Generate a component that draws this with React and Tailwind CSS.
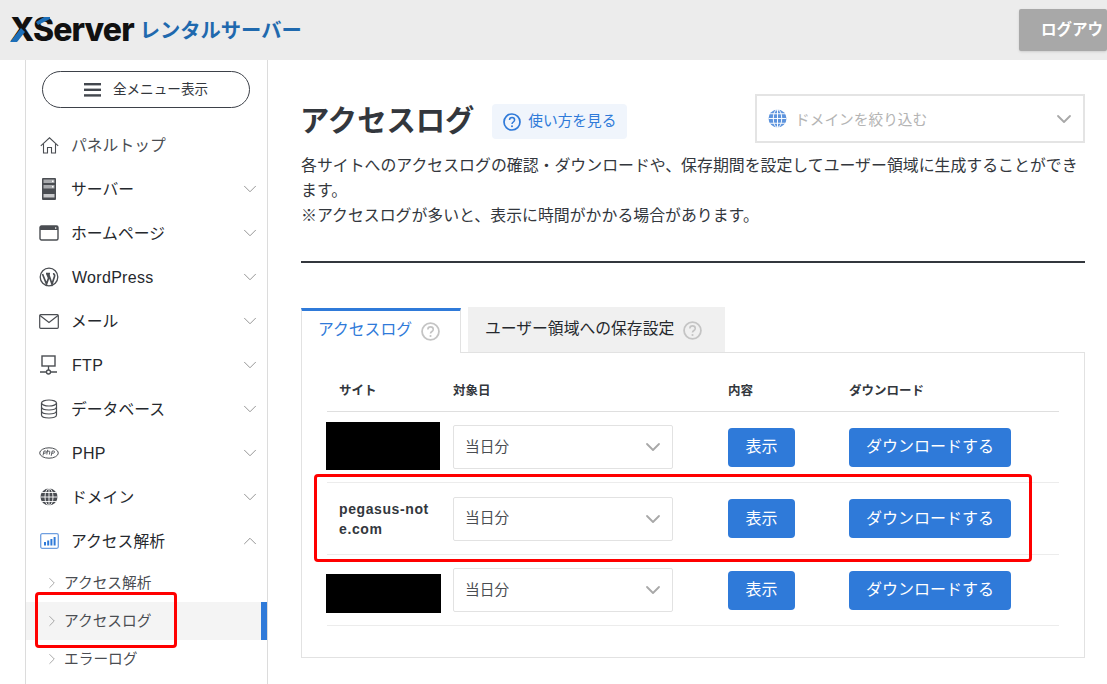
import React from "react";
import { ChevronDown, ChevronUp, ChevronRight } from "lucide-react";

const font = "font-['Liberation_Sans','Noto_Sans_CJK_JP',sans-serif]";

const HomeIcon = () => (
  <svg width="19" height="17" viewBox="0 0 19 17" fill="none" stroke="#4a4d52" strokeWidth="1.1">
    <path d="M0.8 8.8 L9.5 0.8 L18.2 8.8" />
    <path d="M3.5 7 V16 H7.5 V10.5 H11.5 V16 H15.5 V7" />
  </svg>
);

const ServerIcon = () => (
  <svg width="14" height="22" viewBox="0 0 14 22">
    <rect x="0" y="0" width="14" height="22" rx="1" fill="#4a4d52" />
    <rect x="1.5" y="1.5" width="11" height="3.5" fill="#a9abae" />
    <rect x="1.5" y="7" width="11" height="3.5" fill="#a9abae" />
    <rect x="1.5" y="16" width="11" height="3.5" fill="#c9cacc" />
    <rect x="10" y="2.5" width="1.5" height="1.5" fill="#fff" />
    <rect x="10" y="8" width="1.5" height="1.5" fill="#fff" />
  </svg>
);

const WindowIcon = () => (
  <svg width="20" height="16" viewBox="0 0 20 16">
    <rect x="1" y="1" width="18" height="14" rx="1.5" fill="none" stroke="#4a4d52" strokeWidth="1.4" />
    <rect x="1" y="1" width="18" height="4" fill="#4a4d52" />
    <rect x="16" y="2.4" width="1.3" height="1.3" fill="#fff" />
  </svg>
);

const WpIcon = () => (
  <svg width="20" height="20" viewBox="0 0 20 20">
    <circle cx="10" cy="10" r="8.8" fill="none" stroke="#4a4d52" strokeWidth="1.3" />
    <path d="M3.5 7 L7.5 17 L9.6 11 L8 7 M7 6.6 H11 M9.5 7 L13 17 L15.5 9.5 C16 8 15 6.6 14 6.8" fill="none" stroke="#4a4d52" strokeWidth="1.7" />
  </svg>
);

const MailIcon = () => (
  <svg width="20" height="15" viewBox="0 0 20 15" fill="none" stroke="#4a4d52" strokeWidth="1.2">
    <rect x="0.7" y="0.7" width="18.6" height="13.6" rx="1" />
    <path d="M1 1.5 L10 8.5 L19 1.5" />
  </svg>
);

const FtpIcon = () => (
  <svg width="20" height="20" viewBox="0 0 20 20">
    <rect x="3" y="1" width="13" height="10" fill="none" stroke="#4a4d52" strokeWidth="1.4" />
    <path d="M9.5 11 V15 M1 17 H7 M12 17 H18" stroke="#4a4d52" strokeWidth="1.3" />
    <circle cx="9.5" cy="17" r="2" fill="none" stroke="#4a4d52" strokeWidth="1.3" />
  </svg>
);

const DbIcon = () => (
  <svg width="18" height="20" viewBox="0 0 18 20" fill="none" stroke="#4a4d52" strokeWidth="1.2">
    <ellipse cx="9" cy="4" rx="7.5" ry="3" />
    <path d="M1.5 4 V16 C1.5 18 5 19 9 19 C13 19 16.5 18 16.5 16 V4" />
    <path d="M1.5 8 C1.5 10 5 11 9 11 C13 11 16.5 10 16.5 8" />
    <path d="M1.5 12 C1.5 14 5 15 9 15 C13 15 16.5 14 16.5 12" />
  </svg>
);

const PhpIcon = () => (
  <svg width="20" height="12" viewBox="0 0 20 12">
    <ellipse cx="10" cy="6" rx="9.3" ry="5.2" fill="none" stroke="#4a4d52" strokeWidth="1" />
    <path d="M4 8.5 L5 4 H6.6 C7.8 4 7.6 6.2 6 6.2 H4.6 M8.6 2.8 L7.8 7.5 M8.4 5 C9 3.8 11 3.8 10.8 5 L10.4 7.5 M12.2 8.8 L13.2 4 H14.8 C16 4 15.8 6.2 14.2 6.2 H12.8" fill="none" stroke="#4a4d52" strokeWidth="0.9" />
  </svg>
);

const GlobeIcon = ({ color = "#4a4d52", size = 18 }) => (
  <svg width={size} height={size} viewBox="0 0 18 18">
    <circle cx="9" cy="9" r="8.5" fill={color} />
    <g fill="none" stroke="#fff" strokeWidth="0.9">
      <ellipse cx="9" cy="9" rx="4" ry="8.5" />
      <path d="M9 0.5 V17.5 M0.5 9 H17.5 M2 4.5 H16 M2 13.5 H16" />
    </g>
  </svg>
);

const ChartIcon = () => (
  <svg width="19" height="16" viewBox="0 0 19 16">
    <rect x="0.7" y="0.7" width="17.6" height="14.6" rx="1.5" fill="#fff" stroke="#6f9fe0" strokeWidth="1.3" />
    <rect x="4" y="9" width="2" height="3.5" fill="#2f7ad9" />
    <rect x="7.2" y="7.5" width="2" height="5" fill="#2f7ad9" />
    <rect x="10.4" y="6" width="2" height="6.5" fill="#2f7ad9" />
    <rect x="13.6" y="4" width="2" height="8.5" fill="#2f7ad9" />
  </svg>
);

const HelpIcon = ({ color, size = 18 }) => (
  <svg width={size} height={size} viewBox="0 0 18 18">
    <circle cx="9" cy="9" r="8" fill="none" stroke={color} strokeWidth="1.7" />
    <path d="M6.5 7 C6.5 3.8 11.6 3.8 11.6 7 C11.6 9 9 9 9 11" fill="none" stroke={color} strokeWidth="1.5" />
    <circle cx="9" cy="13.3" r="1" fill={color} />
  </svg>
);

const menu = [
  { label: "パネルトップ", icon: <HomeIcon />, noArrow: true, color: "text-[#4a4d52]" },
  { label: "サーバー", icon: <ServerIcon /> },
  { label: "ホームページ", icon: <WindowIcon /> },
  { label: "WordPress", icon: <WpIcon />, latin: true },
  { label: "メール", icon: <MailIcon /> },
  { label: "FTP", icon: <FtpIcon />, latin: true },
  { label: "データベース", icon: <DbIcon /> },
  { label: "PHP", icon: <PhpIcon />, latin: true },
  { label: "ドメイン", icon: <GlobeIcon /> },
  { label: "アクセス解析", icon: <ChartIcon />, open: true },
];

const subMenu = [
  { label: "アクセス解析" },
  { label: "アクセスログ", active: true },
  { label: "エラーログ" },
];

const rows = [
  { site: null, bar: "h-[48px] w-[114px] -mt-[2px]", h: "h-[71px]" },
  { site: "pegasus-note.com", h: "h-[72px]" },
  { site: null, bar: "h-[39px] w-[115px] mt-[7px]", h: "h-[71px]" },
];

function Sidebar() {
  return (
    <aside className="relative ml-[25px] h-[624px] w-[243px] shrink-0 overflow-hidden border-x border-[#dcdcdc]">
      <div className="px-4 pt-[11px]">
        <div className="flex h-[37px] w-[208px] items-center justify-center rounded-full border border-[#3d4149] text-[13.6px] text-[#33373d]">
          <svg width="17" height="14" viewBox="0 0 17 14" className="mr-[12px]">
            <rect y="0" width="17" height="2.4" fill="#43474e" />
            <rect y="5.6" width="17" height="2.4" fill="#43474e" />
            <rect y="11.2" width="17" height="2.4" fill="#43474e" />
          </svg>
          <span className="pt-[2px]">全メニュー表示</span>
        </div>
      </div>
      <ul className="mt-[15px]">
        {menu.map((m) => (
          <li key={m.label} className="flex h-[44px] items-center pl-[13px] pr-[6px]">
            <span className="flex w-[20px] justify-center">{m.icon}</span>
            <span
              className={`ml-[12px] flex-1 pt-[2px] ${m.latin ? "pl-px text-[16px] tracking-[0.3px]" : "text-[15.8px]"} ${
                m.color || "text-[#25282d]"
              }`}
            >
              {m.label}
            </span>
            {!m.noArrow &&
              (m.open ? (
                <ChevronUp size={22} strokeWidth={1} color="#8c8c8c" />
              ) : (
                <ChevronDown size={22} strokeWidth={1} color="#8c8c8c" />
              ))}
          </li>
        ))}
      </ul>
      <ul className="mt-[1px]">
        {subMenu.map((s) => (
          <li
            key={s.label}
            className={`flex h-[38px] items-center pl-[17px] text-[14.7px] text-[#4a4d52] ${
              s.active ? "border-r-[6px] border-[#2f7ad9] bg-[#f4f4f4]" : ""
            }`}
          >
            <ChevronRight size={18} strokeWidth={1} color="#8c8c8c" />
            <span className="ml-[3px]">{s.label}</span>
          </li>
        ))}
      </ul>
    </aside>
  );
}

function SelectBox() {
  return (
    <div className="flex h-[44px] w-[220px] items-center justify-between rounded-[2px] border border-[#e2e2e2] pl-[11px] pr-[7px] text-[14.7px] text-[#4a4d52]">
      当日分
      <ChevronDown size={24} strokeWidth={1.8} color="#a8a8a8" />
    </div>
  );
}

function LogRow({ row }) {
  return (
    <div className={`flex items-center border-b border-[#ececec] ${row.h}`}>
      <div className="w-[126px] shrink-0">
        {row.site ? (
          <p className="ml-[12px] w-[94px] break-all text-[14px] font-bold leading-[20px] tracking-[0.6px] text-[#33373d]">
            {row.site}
          </p>
        ) : (
          <div className={`-ml-px bg-black ${row.bar}`} />
        )}
      </div>
      <SelectBox />
      <button className="ml-[55px] h-[39px] w-[67px] rounded-[4px] bg-[#2f7ad9] text-[16px] text-white">表示</button>
      <button className="ml-[54px] h-[39px] w-[162px] rounded-[4px] bg-[#2f7ad9] text-[16px] text-white">
        ダウンロードする
      </button>
    </div>
  );
}

export default function App() {
  return (
    <div className={`relative h-[684px] w-[1107px] overflow-hidden bg-white ${font}`}>
      <header className="flex h-[60px] items-center justify-between bg-[#ececec] pl-[10px]">
        <div className="flex items-center">
          <span className="relative font-['Inter',sans-serif] text-[32px] font-extrabold leading-none tracking-[-0.9px] text-[#111]">
            XServer
            {/* blue strokes of the logo mark */}
            <svg width="42" height="26" viewBox="0 0 42 26" className="absolute left-0 top-[3px]">
              <polygon points="0,25 7,25 15,15 11,11" fill="#1d6fb8" />
              <polygon points="28,8 40,2 40,0 34,0 26,5" fill="#1d6fb8" />
            </svg>
          </span>
          <span className="ml-[6px] pt-[3px] text-[20.3px] font-bold text-[#1f69ae]">レンタルサーバー</span>
        </div>
        <div className="flex h-[42px] w-[88px] items-center overflow-hidden whitespace-nowrap rounded-[2px] bg-[#a8a8a8] pl-[22px] text-[15.5px] font-bold text-white shadow-sm">
          ログアウト
        </div>
      </header>

      <div className="flex">
        <Sidebar />
        <main className="ml-[33px] w-[784px] pt-[38px]">
          <div className="flex items-start">
            <h1 className="-ml-px mt-[3px] text-[29.3px] font-bold leading-[40px] text-[#33373d]">アクセスログ</h1>
            <a className="ml-[18px] mt-[6px] flex h-[35px] w-[135px] items-center justify-center gap-[7px] rounded-[4px] bg-[#f0f5fc] text-[14.7px] text-[#2f7ad9]">
              <HelpIcon color="#2f7ad9" />
              使い方を見る
            </a>
            <div className="ml-auto -mt-[4px] flex h-[49px] w-[330px] items-center border-2 border-[#e4e4e4] pl-[11px] pr-[7px] text-[14.7px] text-[#b4b4b4]">
              <GlobeIcon color="#5c93dd" size={19} />
              <span className="ml-[8px] flex-1 pt-[4px]">ドメインを絞り込む</span>
              <ChevronDown size={24} strokeWidth={1.8} color="#a8a8a8" />
            </div>
          </div>

          <p className="mt-[10px] text-[15.9px] leading-[25px] text-[#33373d]">
            各サイトへのアクセスログの確認・ダウンロードや、保存期間を設定してユーザー領域に生成することができます。
            <br />
            ※アクセスログが多いと、表示に時間がかかる場合があります。
          </p>

          <hr className="mt-[33px] border-0 border-t-2 border-[#33373d]" />

          <div className="mt-[44px] flex items-end">
            <div className="z-10 -mb-px flex h-[45px] w-[160px] items-center border-x border-[#e2e2e2] border-t-[3px] border-t-[#2f7ad9] bg-white pb-[5px] pl-[16px] text-[15.8px] text-[#2f7ad9]">
              アクセスログ
              <span className="ml-[9px] mt-[3px]">
                <HelpIcon color="#c4c4c4" size={19} />
              </span>
            </div>
            <div className="ml-[7px] flex h-[45px] w-[257px] items-center bg-[#f0f0f0] pb-[2px] pl-[17px] text-[15.8px] text-[#25282d]">
              ユーザー領域への保存設定
              <span className="ml-[9px] mt-[3px]">
                <HelpIcon color="#c4c4c4" size={19} />
              </span>
            </div>
          </div>

          <section className="h-[306px] border border-[#e2e2e2] px-[25px] pt-[19px]">
            <div className="flex h-[40px] items-start border-b border-[#dfdfdf] pt-[10px] text-[12.5px] font-bold text-[#33373d]">
              <span className="ml-[12px] w-[114px]">サイト</span>
              <span className="w-[275px]">対象日</span>
              <span className="w-[121px]">内容</span>
              <span>ダウンロード</span>
            </div>
            {rows.map((r, i) => (
              <LogRow key={i} row={r} />
            ))}
          </section>
        </main>
      </div>

      {/* annotation boxes drawn over the screenshot */}
      <div className="absolute left-[35px] top-[592px] h-[56px] w-[142px] rounded-[4px] border-[3px] border-[#f00]" />
      <div className="absolute left-[314px] top-[474px] h-[88px] w-[718px] rounded-[4px] border-[3px] border-[#f00]" />
    </div>
  );
}
